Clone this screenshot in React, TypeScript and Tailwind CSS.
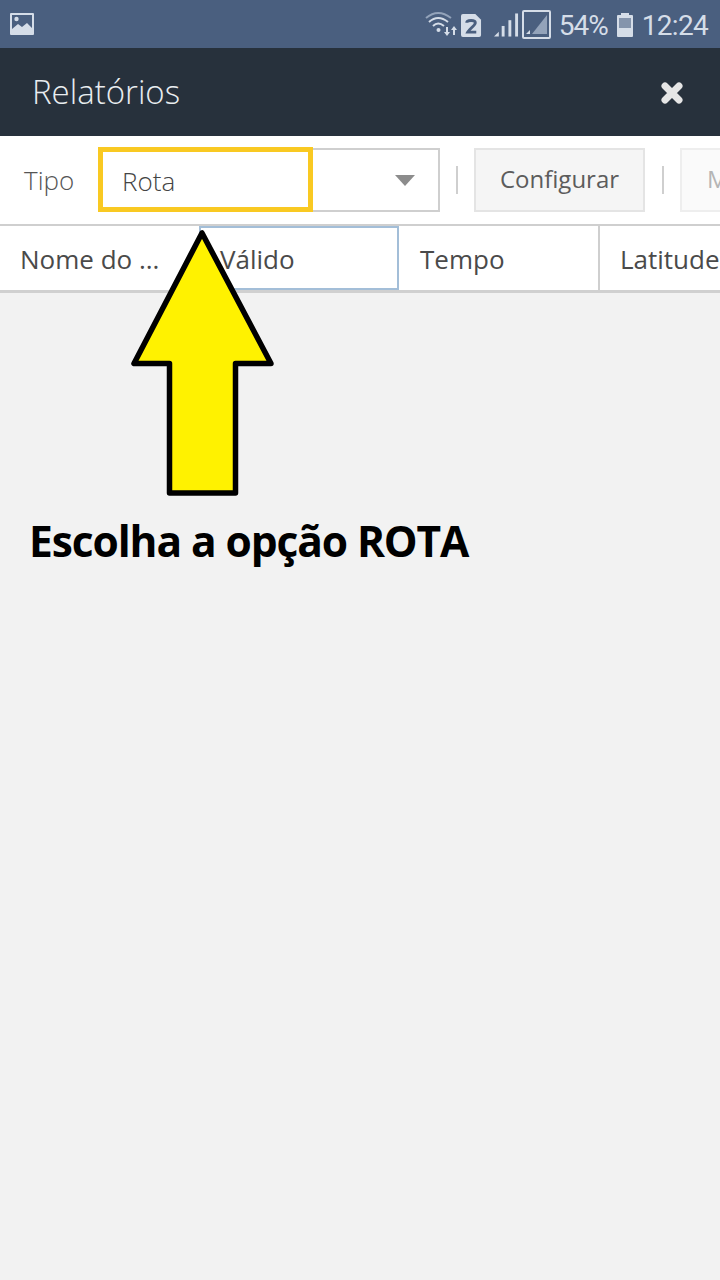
import React from "react";

function StatusIcons() {
  return (
    <div className="flex items-center text-[#d5dde8]" style={{ fontFamily: "Roboto, sans-serif" }}>
      <svg width="32" height="26" viewBox="0 0 32 26">
        <path d="M1 7 Q13 -3 26 7" fill="none" stroke="#93a3ba" strokeWidth="2" />
        <path d="M4 11 Q13 3 23 11" fill="none" stroke="#d5dde8" strokeWidth="2" />
        <path d="M8 15 Q13 10 19 15" fill="none" stroke="#d5dde8" strokeWidth="2" />
        <circle cx="13.5" cy="19" r="2" fill="#d5dde8" />
        <path d="M21 16h2v5h2l-3 4-3-4h2z" fill="#d5dde8" />
        <path d="M28 24h2v-5h2l-3-4-3 4h2z" fill="#d5dde8" />
      </svg>
      <svg width="21" height="23" viewBox="0 0 22 24" className="ml-[4px] mt-[2px]">
        <path d="M2 0h13l6 6v16a2 2 0 0 1-2 2H2a2 2 0 0 1-2-2V2a2 2 0 0 1 2-2z" fill="#d5dde8" />
        <path d="M6 9c0-3 9-3 9 0 0 3-6 6-8 10h9" fill="none" stroke="#4a5f7f" strokeWidth="3" />
      </svg>
      <svg width="25" height="26" viewBox="0 0 26 26" className="ml-[12px] mt-[1px]">
        <path d="M0 25l5-5v5z" fill="#d5dde8" />
        <rect x="8" y="14" width="3" height="11" fill="#d5dde8" />
        <rect x="15" y="8" width="3" height="17" fill="#d5dde8" />
        <rect x="22" y="1" width="3" height="24" fill="#d5dde8" />
      </svg>
      <svg width="29" height="29" viewBox="0 0 29 29" className="ml-[3px] mt-[1px]">
        <rect x="1" y="1" width="27" height="27" rx="1" fill="none" stroke="#d5dde8" strokeWidth="2" />
        <path d="M10 24L25 5v19z" fill="#93a3ba" />
        <path d="M4 24l4-4v4z" fill="#d5dde8" />
      </svg>
      <span className="ml-[8px] mt-[3px] text-[28px] leading-none tracking-[-1px]">54%</span>
      <svg width="16" height="24" viewBox="0 0 16 24" className="ml-[9px] mt-[2px]">
        <rect x="4" y="0" width="8" height="3" fill="#d5dde8" />
        <rect x="0" y="2" width="16" height="22" rx="1" fill="#d5dde8" />
        <rect x="2" y="5" width="12" height="10" fill="#8494ac" />
      </svg>
      <span className="ml-[9px] mr-[12px] mt-[3px] text-[28px] leading-none tracking-[-0.7px]">12:24</span>
    </div>
  );
}

export default function App() {
  return (
    <div className="relative w-[720px] h-[1280px] overflow-hidden bg-[#f2f2f2]" style={{ fontFamily: '"Open Sans", sans-serif' }}>
      <div className="h-[48px] bg-[#4a5f7f] flex items-center justify-between">
        <svg width="24" height="22" viewBox="0 0 24 22" className="ml-[10px]">
          <rect width="24" height="22" rx="1" fill="#d5dde8" />
          <rect x="2" y="2" width="20" height="14" fill="#4a5f7f" />
          <circle cx="6.5" cy="6" r="2.2" fill="#d5dde8" />
          <path d="M2 16l6-5 4 3 5-4 5 5v6H2z" fill="#d5dde8" />
        </svg>
        <StatusIcons />
      </div>

      <div className="h-[88px] bg-[#27313c] flex items-center justify-between pl-[32px] pr-[36px]">
        <span className="text-[33px] font-light text-[#e9edf0] leading-none mb-[2px]">Relatórios</span>
        <svg width="24" height="24" viewBox="0 0 24 24" className="mt-[1px]">
          <path d="M5 5L19 19M19 5L5 19" stroke="#e6e6e6" strokeWidth="7" strokeLinecap="round" />
        </svg>
      </div>

      <div className="h-[88px] bg-white flex items-center overflow-hidden">
        <span className="ml-[24px] w-[76px] shrink-0 text-[26px] font-light text-[#555]">Tipo</span>
        <div className="w-[340px] h-[64px] shrink-0 border-2 border-[#cfcfcf] flex items-center justify-between pl-[20px] pr-[23px]">
          <span className="text-[26px] font-light text-[#444] mt-[2px]">Rota</span>
          <svg width="20" height="11" viewBox="0 0 20 11">
            <path d="M0 0h20l-10 11z" fill="#8c8c8c" />
          </svg>
        </div>
        <div className="ml-[16px] w-[2px] h-[28px] shrink-0 bg-[#cfcfcf]" />
        <div className="ml-[16px] w-[171px] h-[64px] shrink-0 bg-[#f5f5f5] border-2 border-[#e4e4e4] flex items-center justify-center">
          <span className="text-[24px] text-[#5c5c5c] mb-[2px]">Configurar</span>
        </div>
        <div className="ml-[17px] w-[2px] h-[28px] shrink-0 bg-[#cfcfcf]" />
        <div className="ml-[16px] w-[40px] h-[64px] shrink-0 bg-[#fafafa] border-2 border-r-0 border-[#eeeeee] flex items-center pl-[25px]">
          <span className="text-[24px] text-[#b5b5b5] mb-[2px]">M</span>
        </div>
      </div>

      <div className="border-t-2 border-b-[3px] border-t-[#cfcfcf] border-b-[#d0d0d0] bg-white flex overflow-hidden text-[#4a4a4a]">
        <div className="w-[199px] shrink-0 h-[64px] flex items-center pl-[20px]">
          <span className="text-[26px] leading-none whitespace-nowrap mt-[2px]">Nome do ...</span>
        </div>
        <div className="w-[200px] shrink-0 h-[64px] flex items-center pl-[19px] border-[2.5px] border-[#a3bed8]">
          <span className="text-[26px] leading-none whitespace-nowrap mt-[2px]">Válido</span>
        </div>
        <div className="w-[201px] shrink-0 h-[64px] flex items-center pl-[21px] border-r-2 border-[#cfcfcf]">
          <span className="text-[26px] leading-none whitespace-nowrap mt-[2px]">Tempo</span>
        </div>
        <div className="w-[120px] shrink-0 h-[64px] flex items-center pl-[20px]">
          <span className="text-[26px] leading-none whitespace-nowrap mt-[2px]">Latitude</span>
        </div>
      </div>

      <div className="absolute left-[98px] top-[147px] w-[215px] h-[65px] border-[5px] border-[#f9c922]" />

      <svg width="160" height="280" viewBox="0 0 160 280" className="absolute left-[125px] top-[225px]">
        <path
          d="M77 8L9 138.500H44.500V268H110.500V138.500H146z"
          fill="#fff200"
          stroke="#000"
          strokeWidth="5.500"
          strokeLinejoin="round"
        />
      </svg>

      <div className="absolute left-[29px] top-[513px] text-[42.5px] font-bold text-black leading-[56px] tracking-[-1.1px] whitespace-nowrap">
        Escolha a opção ROTA
      </div>
    </div>
  );
}
